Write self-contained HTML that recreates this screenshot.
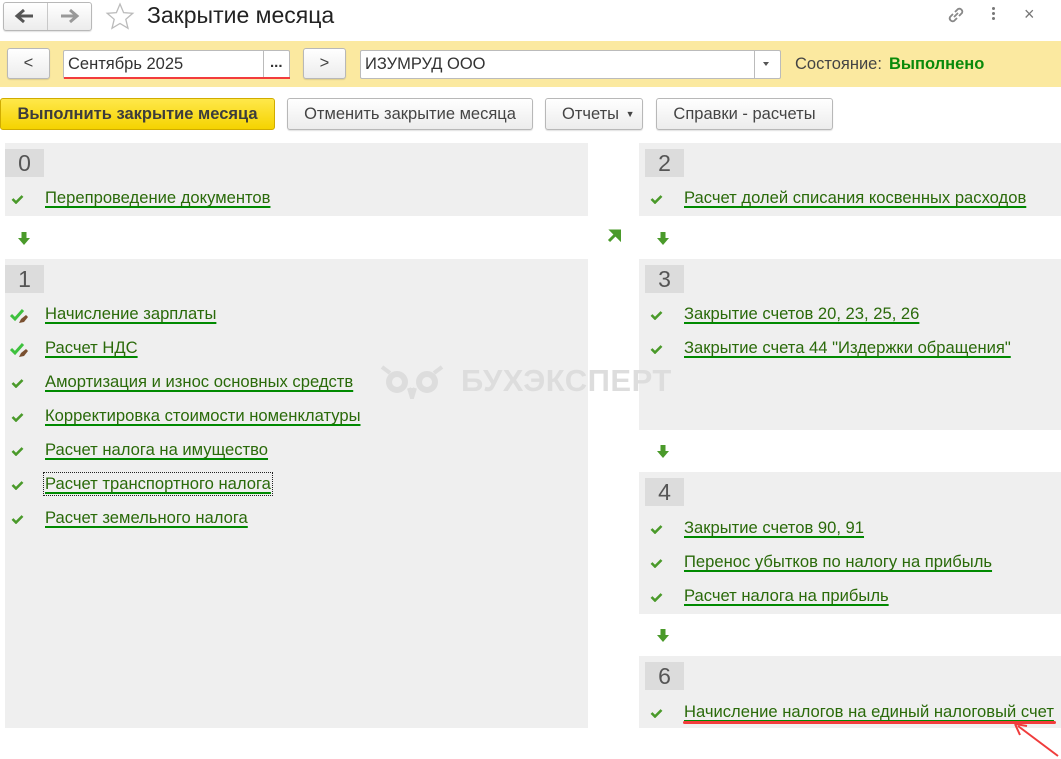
<!DOCTYPE html>
<html><head><meta charset="utf-8"><style>
*{box-sizing:border-box;margin:0;padding:0}
body{width:1061px;height:759px;background:#fff;font-family:"Liberation Sans",Arial,sans-serif;position:relative;overflow:hidden;color:#333}
.a{position:absolute}
.btn{position:absolute;border:1px solid #b8b8b8;border-radius:3px;background:linear-gradient(#fff,#ececec);font-size:16.5px;color:#444;text-align:center;box-shadow:0 1px 1px rgba(0,0,0,.12)}
.panel{position:absolute;background:#efefef}
.num{position:absolute;background:#dcdcdc;width:39px;height:28px;font-size:23px;color:#555;text-align:center;line-height:29px}
.it{position:absolute;font-size:16.6px;color:#2a6a0a;text-decoration:underline;text-decoration-color:#008a00;text-underline-offset:3px;text-decoration-thickness:1.5px;white-space:nowrap}
.ck{position:absolute;width:13px;height:10px}
.ar{position:absolute;width:12px;height:13px}
</style></head><body>
<div class="btn" style="left:3px;top:2px;width:89px;height:29px"></div>
<div class="a" style="left:47px;top:3px;width:1px;height:27px;background:#c8c8c8"></div>
<svg class="a" style="left:14px;top:7px" width="22" height="18"><path d="M3 9h16M10 3L3 9l7 6" stroke="#555" stroke-width="3" fill="none"/></svg>
<svg class="a" style="left:58px;top:7px" width="22" height="18"><path d="M3 9h16M12 3l7 6-7 6" stroke="#999" stroke-width="3" fill="none"/></svg>
<svg class="a" style="left:105px;top:2px" width="30" height="28"><path d="M15 2l3.6 8.6 9.2.7-7 6 2.2 9L15 21.5 7 26.3l2.2-9-7-6 9.2-.7z" fill="none" stroke="#bbb" stroke-width="1.3"/></svg>
<div class="a" style="left:147px;top:2px;font-size:23px;color:#222">Закрытие месяца</div>
<svg class="a" style="left:945px;top:4px" width="22" height="22"><g fill="none" stroke="#888" stroke-width="1.8"><path d="M9 13l4-4"/><path d="M8 10l-3 3a3 3 0 004 4l3-3"/><path d="M14 12l3-3a3 3 0 00-4-4l-3 3"/></g></svg>
<div class="a" style="left:992px;top:7px;width:3px;height:3px;background:#777;border-radius:2px;box-shadow:0 5px 0 #777,0 10px 0 #777"></div>
<div class="a" style="left:1024px;top:4px;font-size:18px;color:#777">×</div>
<div class="a" style="left:0;top:41px;width:1061px;height:46px;background:#fbe9a0"></div>
<div class="btn" style="left:7px;top:48px;width:43px;height:31px;line-height:28px">&lt;</div>
<div class="a" style="left:63px;top:50px;width:227px;height:29px;background:#fff;border:1px solid #bbb;border-radius:2px"></div>
<div class="a" style="left:263px;top:50px;width:1px;height:29px;background:#bbb"></div>
<div class="a" style="left:68px;top:55px;font-size:16.5px;color:#333">Сентябрь 2025</div>
<div class="a" style="left:270px;top:54px;font-size:15px;color:#333;font-weight:bold">...</div>
<div class="a" style="left:64px;top:77px;width:226px;height:2px;background:#f23c3c"></div>
<div class="btn" style="left:303px;top:48px;width:43px;height:31px;line-height:28px">&gt;</div>
<div class="a" style="left:360px;top:50px;width:421px;height:29px;background:#fff;border:1px solid #bbb;border-radius:2px"></div>
<div class="a" style="left:754px;top:50px;width:1px;height:29px;background:#bbb"></div>
<div class="a" style="left:365px;top:55px;font-size:16.5px;color:#333">ИЗУМРУД ООО</div>
<div class="a" style="left:763px;top:62px;border:3.5px solid transparent;border-top:4px solid #555"></div>
<div class="a" style="left:795px;top:55px;font-size:16.5px;color:#444">Состояние:</div>
<div class="a" style="left:889px;top:55px;font-size:16.5px;color:#0a8a0a;font-weight:bold">Выполнено</div>
<div class="a" style="left:0;top:98px;width:275px;height:32px;border:1px solid #d0ac00;border-radius:3px;background:linear-gradient(#ffe84a,#f5d300);font-size:16.5px;font-weight:bold;color:#3c3c3c;text-align:center;line-height:31px">Выполнить закрытие месяца</div>
<div class="btn" style="left:287px;top:98px;width:246px;height:32px;line-height:31px">Отменить закрытие месяца</div>
<div class="btn" style="left:545px;top:98px;width:98px;height:32px;line-height:31px;text-align:left;padding-left:16px">Отчеты <span style="font-size:9px;position:relative;top:-2px;left:2px">▼</span></div>
<div class="btn" style="left:656px;top:98px;width:177px;height:32px;line-height:31px">Справки - расчеты</div>
<div class="panel" style="left:5px;top:143px;width:583px;height:73px"></div>
<div class="panel" style="left:5px;top:259px;width:583px;height:469px"></div>
<div class="panel" style="left:639px;top:143px;width:422px;height:73px"></div>
<div class="panel" style="left:639px;top:259px;width:422px;height:171px"></div>
<div class="panel" style="left:639px;top:472px;width:422px;height:142px"></div>
<div class="panel" style="left:639px;top:656px;width:422px;height:72px"></div>
<div class="a" style="left:461px;top:363px;font-size:31px;font-weight:bold;color:#dddddd;letter-spacing:0.5px">БУХЭКСПЕРТ</div>
<svg class="a" style="left:380px;top:363px" width="70" height="36"><g fill="none" stroke="#dddddd" stroke-width="6"><circle cx="17" cy="19" r="8"/><circle cx="47" cy="19" r="8"/></g><path d="M2 4l8 6M62 4l-8 6M29 25l3 10 3-10" stroke="#dddddd" stroke-width="4" fill="#dddddd"/></svg>
<div class="num" style="left:5px;top:149px">0</div>
<div class="num" style="left:5px;top:265px">1</div>
<div class="num" style="left:645px;top:149px">2</div>
<div class="num" style="left:645px;top:265px">3</div>
<div class="num" style="left:645px;top:478px">4</div>
<div class="num" style="left:645px;top:662px">6</div>
<svg width="0" height="0" style="position:absolute"><defs>
<symbol id="c" viewBox="0 0 13 10"><path d="M1.5 5l3.5 3.5L11.5 2" stroke="#4a9a2a" stroke-width="2.6" fill="none"/></symbol>
<symbol id="d" viewBox="0 0 12 13"><path d="M3.5 0h5v6H12L6 13 0 6h3.5z" fill="#4a9a2a"/></symbol>
<symbol id="p" viewBox="0 0 18 16"><path d="M1 7l4 4 8-9" stroke="#3ec13e" stroke-width="3" fill="none"/><path d="M9 15l2-4 5-4 2 2-4 5z" fill="#7a5030"/></symbol>
</defs></svg>
<svg class="ck" style="left:11px;top:194px"><use href="#c"/></svg><div class="it" style="left:45px;top:188px">Перепроведение документов</div>
<svg class="ar" style="left:18px;top:232px"><use href="#d"/></svg>
<svg class="a" style="left:10px;top:308px" width="18" height="16"><use href="#p"/></svg><div class="it" style="left:45px;top:304px">Начисление зарплаты</div>
<svg class="a" style="left:10px;top:342px" width="18" height="16"><use href="#p"/></svg><div class="it" style="left:45px;top:338px">Расчет НДС</div>
<svg class="ck" style="left:11px;top:378px"><use href="#c"/></svg><div class="it" style="left:45px;top:372px">Амортизация и износ основных средств</div>
<svg class="ck" style="left:11px;top:412px"><use href="#c"/></svg><div class="it" style="left:45px;top:406px">Корректировка стоимости номенклатуры</div>
<svg class="ck" style="left:11px;top:446px"><use href="#c"/></svg><div class="it" style="left:45px;top:440px">Расчет налога на имущество</div>
<svg class="ck" style="left:11px;top:480px"><use href="#c"/></svg><div class="it" style="left:45px;top:474px;outline:1px dotted #222;outline-offset:1px">Расчет транспортного налога</div>
<svg class="ck" style="left:11px;top:514px"><use href="#c"/></svg><div class="it" style="left:45px;top:508px">Расчет земельного налога</div>
<svg class="a" style="left:607px;top:229px" width="14" height="14"><path d="M2 12L10 4M5 2h8v8z" stroke="#4a9a2a" stroke-width="3" fill="#4a9a2a"/></svg>
<svg class="ck" style="left:650px;top:194px"><use href="#c"/></svg><div class="it" style="left:684px;top:188px">Расчет долей списания косвенных расходов</div>
<svg class="ar" style="left:657px;top:232px"><use href="#d"/></svg>
<svg class="ck" style="left:650px;top:310px"><use href="#c"/></svg><div class="it" style="left:684px;top:304px">Закрытие счетов 20, 23, 25, 26</div>
<svg class="ck" style="left:650px;top:344px"><use href="#c"/></svg><div class="it" style="left:684px;top:338px">Закрытие счета 44 "Издержки обращения"</div>
<svg class="ar" style="left:657px;top:445px"><use href="#d"/></svg>
<svg class="ck" style="left:650px;top:524px"><use href="#c"/></svg><div class="it" style="left:684px;top:518px">Закрытие счетов 90, 91</div>
<svg class="ck" style="left:650px;top:558px"><use href="#c"/></svg><div class="it" style="left:684px;top:552px">Перенос убытков по налогу на прибыль</div>
<svg class="ck" style="left:650px;top:592px"><use href="#c"/></svg><div class="it" style="left:684px;top:586px">Расчет налога на прибыль</div>
<svg class="ar" style="left:657px;top:629px"><use href="#d"/></svg>
<svg class="ck" style="left:650px;top:708px"><use href="#c"/></svg><div class="it" style="left:684px;top:702px">Начисление налогов на единый налоговый счет</div>
<div class="a" style="left:683px;top:721px;width:373px;height:3px;background:#f23c3c;border-radius:2px"></div>
<svg class="a" style="left:1010px;top:720px" width="51" height="39"><path d="M48 36L8 6M5 4l12 2M5 4l5 11" stroke="#f03c3c" stroke-width="2" fill="none"/></svg>
</body></html>
